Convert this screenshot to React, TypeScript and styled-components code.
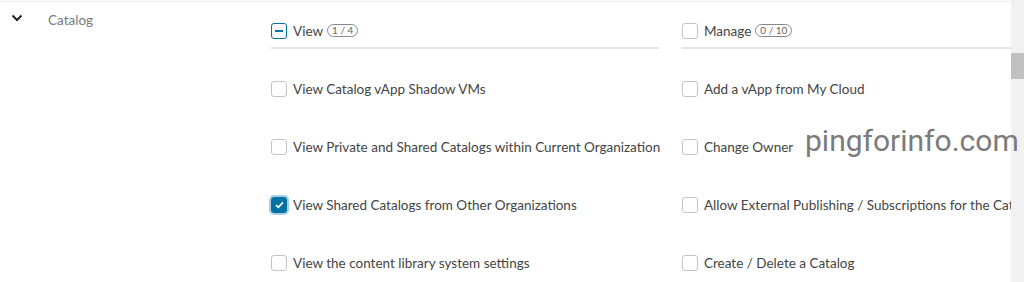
import React from "react"
import styled, { createGlobalStyle } from "styled-components"

const Global = createGlobalStyle`
    html, body {
        margin:0;
        padding:0;
        background:#fff;
        font-family:Lato, "Open Sans", sans-serif;
        overflow:hidden;
    }
`

const Frame = styled.div`
    display:flex;
    width:1024px;
    height:282px;
    overflow:hidden;
    position:relative;
`
const Main = styled.div`
    flex:1;
    display:flex;
    margin-top:1px;
    border-top:1px solid #ececec;
    min-width:0;
    overflow:hidden;
`
const Chevron = styled.div`
    flex:none;
    width:48px;
    padding:11px 0 0 11px;
    box-sizing:border-box;
    svg {
        display:block;
    }
`
const Label = styled.div`
    flex:none;
    width:223px;
    padding-top:10px;
    font-size:13.5px;
    color:#7a7a7a;
`
const Columns = styled.div`
    flex:none;
    display:grid;
    grid-template-columns:388px 388px;
    column-gap:23px;
`
const Column = styled.div`
    display:flex;
    flex-direction:column;
`
const Header = styled.div`
    display:flex;
    align-items:center;
    height:47px;
    padding-top:12px;
    box-sizing:border-box;
    border-bottom:2px solid #e4e4e4;
    gap:4px;
    font-size:13.5px;
    color:#444;
`
const Rows = styled.div`
    padding-top:11px;
`
const Row = styled.div`
    display:flex;
    align-items:center;
    height:58px;
    gap:4px;
    font-size:13.5px;
    color:#444;
    white-space:nowrap;
`
const Box = styled.div<{ $state?: "checked" | "mixed" }>`
    width:14px;
    height:14px;
    flex:none;
    border-radius:3px;
    border:1px solid ${p => (p.$state ? "#0072a3" : "#c4c4c4")};
    background:${p => (p.$state === "checked" ? "#0072a3" : "#fff")};
    box-shadow:${p => (p.$state === "checked" ? "0 0 0 2px #a9cfe6" : "none")};
    display:flex;
    align-items:center;
    justify-content:center;
    margin-right:2px;
`
const Dash = styled.div`
    width:8px;
    height:2px;
    background:#0072a3;
`
const Badge = styled.span`
    font-size:10px;
    color:#666;
    border:1px solid #888;
    border-radius:8px;
    padding:0 4px;
    line-height:11px;
`
const Scrollbar = styled.div`
    width:13px;
    flex:none;
    background:#f1f1f1;
    padding-top:53px;
`
const Thumb = styled.div`
    height:26px;
    background:#c1c1c1;
`
const Watermark = styled.div`
    position:absolute;
    left:805px;
    top:123px;
    font-family:Roboto, sans-serif;
    font-size:30px;
    line-height:35px;
    color:#7b7b7b;
`

type Item = { label: string; checked?: boolean }

const viewItems: Item[] = [
    { label: "View Catalog vApp Shadow VMs" },
    { label: "View Private and Shared Catalogs within Current Organization" },
    { label: "View Shared Catalogs from Other Organizations", checked: true },
    { label: "View the content library system settings" },
]
const manageItems: Item[] = [
    { label: "Add a vApp from My Cloud" },
    { label: "Change Owner" },
    { label: "Allow External Publishing / Subscriptions for the Catalog" },
    { label: "Create / Delete a Catalog" },
]

const Check = () => (
    <svg width="9" height="8" viewBox="0 0 9 8">
        <path d="M1 4.2 L3.4 6.4 L8 1.4" fill="none" stroke="#fff" strokeWidth="1.7" />
    </svg>
)

const Group: React.FC<{ title: string; count: string; mixed?: boolean; items: Item[] }> = ({ title, count, mixed, items }) => (
    <Column>
        <Header>
            <Box $state={mixed ? "mixed" : undefined}>{mixed && <Dash />}</Box>
            {title}
            <Badge>{count}</Badge>
        </Header>
        <Rows>
            {items.map(item => (
                <Row key={item.label}>
                    <Box $state={item.checked ? "checked" : undefined}>{item.checked && <Check />}</Box>
                    {item.label}
                </Row>
            ))}
        </Rows>
    </Column>
)

const App = () => (
    <Frame>
        <Global />
        <Main>
            <Chevron>
                <svg width="12" height="10" viewBox="0 0 12 10">
                    <path d="M1.5 2.5 L6 7 L10.5 2.5" fill="none" stroke="#222" strokeWidth="2" />
                </svg>
            </Chevron>
            <Label>Catalog</Label>
            <Columns>
                <Group title="View" count="1 / 4" mixed items={viewItems} />
                <Group title="Manage" count="0 / 10" items={manageItems} />
            </Columns>
        </Main>
        <Scrollbar>
            <Thumb />
        </Scrollbar>
        <Watermark>pingforinfo.com</Watermark>
    </Frame>
)

export default App
